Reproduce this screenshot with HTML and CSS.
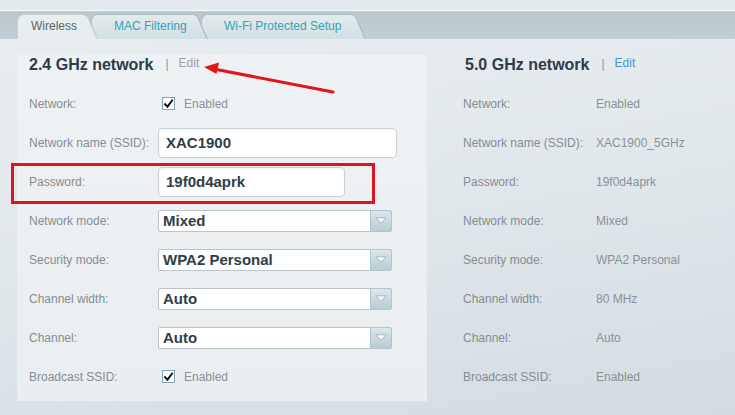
FILE: index.html
```html
<!DOCTYPE html>
<html>
<head>
<meta charset="utf-8">
<link rel="stylesheet" href="styles.css">
</head>
<body>
<div class="page">
  <div class="top"></div>
  <div class="tabbar">
    <div class="tab active t1"><span>Wireless</span></div>
    <div class="tab t2"><span>MAC Filtering</span></div>
    <div class="tab t3"><span>Wi-Fi Protected Setup</span></div>
  </div>
  <div class="content">
    <section class="panel left">
      <header class="head"><h2>2.4 GHz network</h2><span class="sep">|</span><span class="edit dim">Edit</span></header>
      <div class="row"><span class="lbl">Network:</span><span class="chk"><span class="box"><svg viewBox="0 0 12 12" width="12" height="12"><path d="M2.3 6.2 L4.9 8.9 L9.9 2.2" fill="none" stroke="#111" stroke-width="2.1" stroke-linecap="square"/></svg></span>Enabled</span></div>
      <div class="row"><span class="lbl">Network name (SSID):</span><div class="input wide">XAC1900</div></div>
      <div class="row"><span class="lbl">Password:</span><div class="input narrow">19f0d4aprk</div></div>
      <div class="row"><span class="lbl">Network mode:</span><div class="select"><span class="val">Mixed</span><span class="btn"><svg viewBox="0 0 12 7" width="12" height="7"><path d="M0.8 0.8 L11.2 0.8 L6 6.2 Z" fill="#f4f8f9" stroke="#9fb4bc" stroke-width="0.9"/></svg></span></div></div>
      <div class="row"><span class="lbl">Security mode:</span><div class="select"><span class="val">WPA2 Personal</span><span class="btn"><svg viewBox="0 0 12 7" width="12" height="7"><path d="M0.8 0.8 L11.2 0.8 L6 6.2 Z" fill="#f4f8f9" stroke="#9fb4bc" stroke-width="0.9"/></svg></span></div></div>
      <div class="row"><span class="lbl">Channel width:</span><div class="select"><span class="val">Auto</span><span class="btn"><svg viewBox="0 0 12 7" width="12" height="7"><path d="M0.8 0.8 L11.2 0.8 L6 6.2 Z" fill="#f4f8f9" stroke="#9fb4bc" stroke-width="0.9"/></svg></span></div></div>
      <div class="row"><span class="lbl">Channel:</span><div class="select"><span class="val">Auto</span><span class="btn"><svg viewBox="0 0 12 7" width="12" height="7"><path d="M0.8 0.8 L11.2 0.8 L6 6.2 Z" fill="#f4f8f9" stroke="#9fb4bc" stroke-width="0.9"/></svg></span></div></div>
      <div class="row"><span class="lbl">Broadcast SSID:</span><span class="chk"><span class="box"><svg viewBox="0 0 12 12" width="12" height="12"><path d="M2.3 6.2 L4.9 8.9 L9.9 2.2" fill="none" stroke="#111" stroke-width="2.1" stroke-linecap="square"/></svg></span>Enabled</span></div>
    </section>
    <section class="panel right">
      <header class="head"><h2>5.0 GHz network</h2><span class="sep">|</span><span class="edit link">Edit</span></header>
      <div class="row"><span class="lbl rl">Network:</span><span class="rv">Enabled</span></div>
      <div class="row"><span class="lbl rl">Network name (SSID):</span><span class="rv">XAC1900_5GHz</span></div>
      <div class="row"><span class="lbl rl">Password:</span><span class="rv">19f0d4aprk</span></div>
      <div class="row"><span class="lbl rl">Network mode:</span><span class="rv">Mixed</span></div>
      <div class="row"><span class="lbl rl">Security mode:</span><span class="rv">WPA2 Personal</span></div>
      <div class="row"><span class="lbl rl">Channel width:</span><span class="rv">80 MHz</span></div>
      <div class="row"><span class="lbl rl">Channel:</span><span class="rv">Auto</span></div>
      <div class="row"><span class="lbl rl">Broadcast SSID:</span><span class="rv">Enabled</span></div>
    </section>
  </div>
  <div class="redbox"></div>
  <svg class="arrow" width="735" height="415" viewBox="0 0 735 415">
    <line x1="333" y1="92" x2="214" y2="69" stroke="#e3161c" stroke-width="3" stroke-linecap="round"/>
    <path d="M204 67 L219 62.5 L216.5 74 Z" fill="#e3161c"/>
  </svg>
</div>
</body>
</html>
```
FILE: styles.css
```css
* { box-sizing: border-box; }
html, body { margin: 0; padding: 0; }
body {
  width: 735px;
  height: 415px;
  overflow: hidden;
  font-family: "Liberation Sans", Arial, sans-serif;
  background: #dfe6ea;
}
.page {
  position: relative;
  width: 735px;
  height: 415px;
  display: flex;
  flex-direction: column;
}
.top {
  height: 11px;
  background: #e3e9ed;
  border-bottom: 1px solid #f6f8f9;
}
.tabbar {
  height: 28px;
  border-top: 1px solid #c3ccd1;
  background: linear-gradient(#bac7cd, #c3cfd4);
  display: flex;
  align-items: flex-end;
  padding-left: 17px;
}
.tab {
  position: relative;
  height: 25px;
  font-size: 12px;
  line-height: 24px;
  clip-path: polygon(0 6px, 1.5px 2px, 6px 0, calc(100% - 14px) 0, calc(100% - 10px) 2.5px, 100% 100%, 0 100%);
  background: #aebdc4;
}
.tab::before {
  content: "";
  position: absolute;
  top: 1px; left: 1px; right: 1.5px; bottom: 0;
  clip-path: polygon(0 5px, 1.5px 1.5px, 5px 0, calc(100% - 13px) 0, calc(100% - 9.5px) 2px, 100% 100%, 0 100%);
  background: linear-gradient(#e3ebee, #d3dfe3);
}
.tab span { position: relative; }
.t1 { width: 81px; padding-left: 14px; z-index: 3; color: #59636a; background: #c5d0d5; }
.t1::before { background: linear-gradient(#e9eef0, #e7ecef); }
.t2 { width: 117px; margin-left: -7px; padding-left: 23px; z-index: 2; color: #34a3b6; }
.t3 { width: 165px; margin-left: -7px; padding-left: 23px; z-index: 1; color: #34a3b6; }

.content {
  flex: 1;
  display: flex;
  align-items: flex-start;
  background: linear-gradient(170deg, #e8edf0 0%, #e1e8ec 45%, #d2dce1 100%);
}
.panel { display: flex; flex-direction: column; }
.left {
  margin: 16px 0 0 17px;
  width: 410px;
  height: 346px;
  padding-left: 12px;
  background: linear-gradient(#eff2f4, #eaeef1);
}
.right {
  margin-top: 16px;
  padding-left: 36px;
}
.head {
  height: 29px;
  padding-top: 1px;
  display: flex;
  align-items: flex-start;
}
.right .head { padding-left: 2px; }
.head h2 {
  margin: 0;
  font-size: 16px;
  line-height: 18px;
  font-weight: bold;
  color: #2d3c46;
}
.sep {
  font-size: 12px;
  line-height: 14px;
  color: #8d959a;
  margin: 1px 0 0 12px;
}
.edit {
  font-size: 12px;
  line-height: 14px;
  margin-left: 10px;
}
.dim { color: #9ba1a5; }
.link { color: #4a94c9; }
.row {
  height: 39px;
  display: flex;
  align-items: center;
}
.lbl {
  width: 129px;
  font-size: 12px;
  color: #868d92;
}
.rl { width: 133px; }
.rv { font-size: 12px; color: #8b9196; }
.chk {
  display: flex;
  align-items: center;
  font-size: 12px;
  color: #8b9196;
  padding-left: 4px;
}
.box {
  width: 13px;
  height: 13px;
  border: 1px solid #7ea6bd;
  background: #fff;
  margin-right: 9px;
  display: flex;
  align-items: center;
  justify-content: center;
}
.box svg { display: block; }
.input {
  height: 30px;
  background: #fff;
  border: 1px solid #c9d1d5;
  border-radius: 4px;
  box-shadow: inset 0 1px 2px rgba(0,0,0,0.05);
  font-size: 15px;
  font-weight: bold;
  color: #2f3e49;
  padding-left: 7px;
  line-height: 28px;
}
.wide { width: 239px; }
.narrow { width: 187px; }
.select {
  width: 234px;
  height: 22px;
  background: #fff;
  border: 1px solid #b9c5cb;
  border-radius: 2px;
  display: flex;
  align-items: center;
}
.select .val {
  flex: 1;
  padding-left: 4px;
  font-size: 15px;
  font-weight: bold;
  color: #2f3e49;
  line-height: 20px;
}
.select .btn {
  width: 22px;
  height: 22px;
  margin: -1px -1px -1px 0;
  border: 1px solid #b3c5cc;
  border-radius: 0 3px 3px 0;
  background: linear-gradient(#dbe8ec, #b7ccd3);
  display: flex;
  align-items: center;
  justify-content: center;
}
.btn svg { display: block; }
.redbox {
  position: absolute;
  left: 11px;
  top: 163px;
  width: 364px;
  height: 41px;
  border: 3px solid #e0141b;
}
.arrow {
  position: absolute;
  left: 0;
  top: 0;
  pointer-events: none;
}
```
